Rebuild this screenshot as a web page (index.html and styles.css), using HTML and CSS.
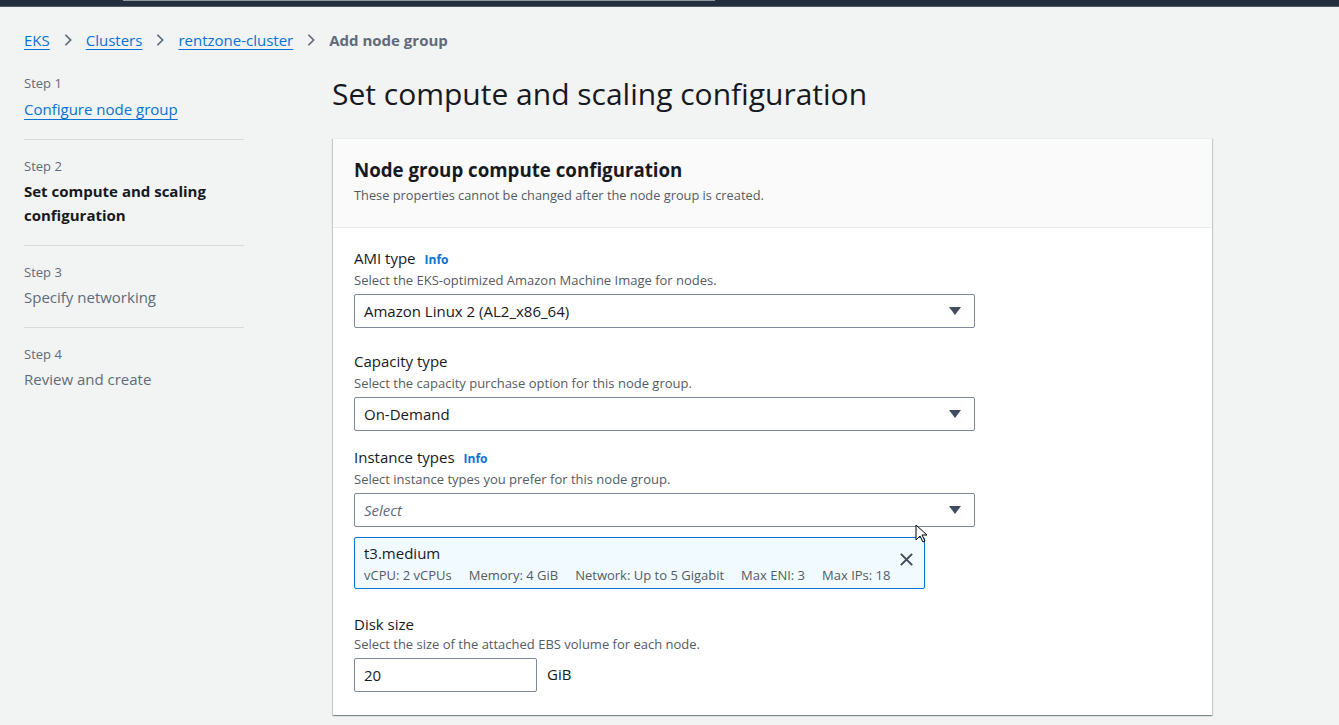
FILE: index.html
```html
<!DOCTYPE html>
<html lang="en">
<head>
<meta charset="utf-8">
<title>Add node group</title>
<link rel="stylesheet" href="styles.css">
</head>
<body>
<div class="topbar"><div class="topbar-search"></div></div>
<div class="page">
  <nav class="breadcrumbs">
    <a href="#">EKS</a>
    <svg class="chev" viewBox="0 0 16 16"><path d="M5 2l6 6-6 6"/></svg>
    <a href="#">Clusters</a>
    <svg class="chev" viewBox="0 0 16 16"><path d="M5 2l6 6-6 6"/></svg>
    <a href="#">rentzone-cluster</a>
    <svg class="chev" viewBox="0 0 16 16"><path d="M5 2l6 6-6 6"/></svg>
    <span class="current">Add node group</span>
  </nav>
  <div class="layout">
    <ol class="steps">
      <li class="step">
        <div class="step-num">Step 1</div>
        <a class="step-link" href="#">Configure node group</a>
      </li>
      <li class="step">
        <div class="step-num">Step 2</div>
        <div class="step-title active">Set compute and scaling configuration</div>
      </li>
      <li class="step">
        <div class="step-num">Step 3</div>
        <div class="step-title">Specify networking</div>
      </li>
      <li class="step">
        <div class="step-num">Step 4</div>
        <div class="step-title">Review and create</div>
      </li>
    </ol>
    <main class="main">
      <h1 class="page-title">Set compute and scaling configuration</h1>
      <section class="card">
        <header class="card-header">
          <h2>Node group compute configuration</h2>
          <p>These properties cannot be changed after the node group is created.</p>
        </header>
        <div class="card-body">
          <div class="field field-ami">
            <div class="label">AMI type <a class="info" href="#">Info</a></div>
            <div class="desc">Select the EKS-optimized Amazon Machine Image for nodes.</div>
            <div class="select"><span>Amazon Linux 2 (AL2_x86_64)</span><svg class="caret" viewBox="0 0 12 8"><path d="M0 0h12L6 8z"/></svg></div>
          </div>
          <div class="field field-cap">
            <div class="label">Capacity type</div>
            <div class="desc">Select the capacity purchase option for this node group.</div>
            <div class="select"><span>On-Demand</span><svg class="caret" viewBox="0 0 12 8"><path d="M0 0h12L6 8z"/></svg></div>
          </div>
          <div class="field field-inst">
            <div class="label">Instance types <a class="info" href="#">Info</a></div>
            <div class="desc">Select instance types you prefer for this node group.</div>
            <div class="select"><span class="placeholder">Select</span><svg class="caret" viewBox="0 0 12 8"><path d="M0 0h12L6 8z"/></svg></div>
            <div class="token">
              <div class="token-text">
                <div class="token-name">t3.medium</div>
                <div class="token-tags"><span>vCPU: 2 vCPUs</span><span>Memory: 4 GiB</span><span>Network: Up to 5 Gigabit</span><span>Max ENI: 3</span><span>Max IPs: 18</span></div>
              </div>
              <svg class="dismiss" viewBox="0 0 16 16"><path d="M2 2l12 12M14 2L2 14"/></svg>
            </div>
            <svg class="cursor" viewBox="0 0 12 19"><path d="M1 1v15l4-4 3 6 2-1-3-6h5z"/></svg>
          </div>
          <div class="field field-disk">
            <div class="label">Disk size</div>
            <div class="desc">Select the size of the attached EBS volume for each node.</div>
            <div class="disk-row"><div class="input">20</div><span class="unit">GiB</span></div>
          </div>
        </div>
      </section>
    </main>
  </div>
</div>
</body>
</html>
```

FILE: styles.css
```css
* { box-sizing: border-box; }
html, body { margin: 0; padding: 0; }
body {
  background: #f2f3f3;
  font-family: "Open Sans", "Noto Sans", sans-serif;
  color: #16191f;
  height: 725px;
  overflow: hidden;
}
.topbar {
  height: 7px;
  background: #232f3e;
  border-bottom: 1px solid #545b64;
  position: relative;
}
.topbar-search {
  position: absolute;
  left: 123px;
  top: 0;
  width: 592px;
  height: 1px;
  background: #8d9a9b;
}
.page { padding: 0 24px; }
.breadcrumbs {
  display: flex;
  align-items: center;
  gap: 11px;
  padding-top: 22px;
  height: 44px;
  font-size: 15px;
  line-height: 20px;
}
.breadcrumbs a {
  color: #0972d3;
  text-decoration: underline;
  text-underline-offset: 3px;
  text-decoration-thickness: 1px;
}
.chev { width: 14px; height: 14px; fill: none; stroke: #5f6b7a; stroke-width: 2; }
.current { color: #5f6b7a; font-weight: 700; }

.layout {
  display: grid;
  grid-template-columns: 220px 880px;
  column-gap: 88px;
  margin-top: 16px;
}
.steps { list-style: none; margin: 6px 0 0; padding: 0; }
.step {
  border-bottom: 1px solid #d5dbdb;
  padding: 16px 0 18px;
}
.step:first-child { padding-top: 0; }
.step:last-child { border-bottom: none; }
.step-num { font-size: 13px; line-height: 20px; color: #5f6b7a; }
.step-link, .step-title { display: block; margin-top: 3px; font-size: 15px; line-height: 24px; }
.step-link { margin-top: 4px; color: #0972d3; text-decoration: underline; text-underline-offset: 4px; }
.step-title { color: #5f6b7a; }
.step-title.active { color: #16191f; font-weight: 700; }

.main { padding-left: 1px; }
.page-title {
  margin: 9px 0 26px -1px;
  font-size: 30px;
  line-height: 36px;
  font-weight: 400;
  color: #16191f;
}
.card {
  background: #fff;
  box-shadow: 0 1px 1px 0 rgba(0,28,36,0.3), 1px 1px 1px 0 rgba(0,28,36,0.15), -1px 1px 1px 0 rgba(0,28,36,0.15);
  border-top: 1px solid #eaeded;
}
.card-header {
  background: #fafafa;
  border-bottom: 1px solid #e9ebed;
  padding: 20px 21px 24px;
}
.card-header h2 { margin: 0; font-size: 18.7px; line-height: 22px; font-weight: 700; }
.card-header p { margin: 6px 0 0; font-size: 12.8px; line-height: 16px; color: #545b64; }
.card-body { padding: 19px 21px 23px; }
.field { width: 621px; position: relative; }
.field-cap { margin-top: 22px; }
.field-inst { margin-top: 15px; }
.field-disk { margin-top: 24px; }
.label { height: 22px; font-size: 15px; line-height: 22px; color: #16191f; display: flex; align-items: baseline; gap: 9px; }
.info { font-size: 12px; font-weight: 700; color: #0972d3; text-decoration: none; }
.desc { margin-top: 3px; font-size: 13px; line-height: 16px; color: #545b64; }
.field-disk .desc { margin-top: 1px; }
.select {
  margin-top: 6px;
  height: 34px;
  border: 1px solid #7d8998;
  border-radius: 2px;
  display: flex;
  align-items: center;
  justify-content: space-between;
  padding: 0 13px 0 9px;
  font-size: 15px;
  background: #fff;
}
.placeholder { font-style: italic; color: #5f6b7a; }
.caret { width: 12px; height: 8px; fill: #414d5c; }
.token {
  margin-top: 10px;
  width: 571px;
  height: 52px;
  border: 1px solid #0972d3;
  border-radius: 2px;
  background: #f1faff;
  display: flex;
  justify-content: space-between;
  padding: 5px 9px 0 9px;
}
.token-name { font-size: 15px; line-height: 20px; }
.token-tags { margin-top: 4px; display: flex; gap: 17px; font-size: 13px; line-height: 16px; color: #545b64; }
.dismiss { width: 15px; height: 15px; margin-top: 9px; margin-right: 1px; fill: none; stroke: #414d5c; stroke-width: 2.2; }
.cursor {
  position: absolute;
  left: 561px;
  top: 78px;
  width: 12px;
  height: 19px;
  fill: #fff;
  stroke: #000;
  stroke-width: 1;
}
.disk-row { margin-top: 6px; display: flex; align-items: center; gap: 10px; }
.input {
  width: 183px;
  height: 34px;
  border: 1px solid #7d8998;
  border-radius: 2px;
  background: #fff;
  font-size: 15px;
  line-height: 32px;
  padding-left: 9px;
}
.unit { font-size: 15px; margin-top: -2px; }
```
